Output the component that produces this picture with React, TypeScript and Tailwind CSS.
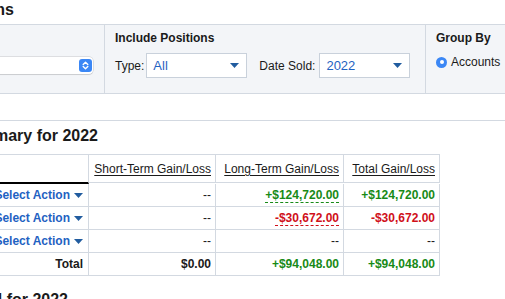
import React from "react";

function Caret() {
  return (
    <svg width="9" height="5" viewBox="0 0 9 5" className="shrink-0">
      <path d="M0 0H9L4.5 5Z" fill="#215c9f" />
    </svg>
  );
}

function SelectBox({ value, width }: { value: string; width: string }) {
  return (
    <div
      className={`${width} shrink-0 h-[25px] bg-white border border-[#c9d1db] flex items-center justify-between pl-[6px] pr-[7px] text-[13px] text-[#1f62c2]`}
    >
      <span>{value}</span>
      <Caret />
    </div>
  );
}

function Stepper() {
  return (
    <div className="w-[13px] h-[13px] rounded-[3px] bg-[#3b87f5] flex items-center justify-center">
      <svg width="13" height="13" viewBox="0 0 13 13">
        <path d="M4.2 5.4L6.5 3.2L8.8 5.4" stroke="white" strokeWidth="1.4" fill="none" strokeLinecap="round" strokeLinejoin="round" />
        <path d="M4.2 7.6L6.5 9.8L8.8 7.6" stroke="white" strokeWidth="1.4" fill="none" strokeLinecap="round" strokeLinejoin="round" />
      </svg>
    </div>
  );
}

function SelectAction() {
  return (
    <div className="h-[23px] border-r border-b border-[#d3d9e1] flex items-center justify-end pr-[5px] whitespace-nowrap">
      <span className="shrink-0 font-bold text-[#1f62c2]">Select Action</span>
      <span className="shrink-0 ml-[4px] flex items-center">
        <Caret />
      </span>
    </div>
  );
}

const cell =
  "h-[23px] border-r border-b border-[#d3d9e1] flex items-center justify-end pr-[4px] whitespace-nowrap";
const headCell =
  "h-[29px] border-t border-r border-b border-[#d3d9e1] flex items-center justify-end pr-[4px] whitespace-nowrap underline underline-offset-[2px]";

export default function App() {
  return (
    <div className="w-[505px] h-[299px] overflow-hidden bg-white text-[#1a1a1a] font-['Liberation_Sans',Arial,sans-serif]">
      <div className="pt-[1px] w-[14px] flex justify-end">
        <h1 className="shrink-0 whitespace-nowrap text-[16px] leading-[18px] font-bold">
          Filter Options
        </h1>
      </div>

      <div className="mt-[5px] h-[70px] flex bg-[#f3f5f8] border-y border-[#d3d9e1]">
        <div className="w-[105px] shrink-0 border-r border-[#d3d9e1] pt-[6px] pr-[11px] flex flex-col items-end">
          <div className="h-[14px]" />
          <div className="mt-[8px] h-[25px] flex items-center justify-end">
            <div className="w-[160px] shrink-0 h-[17px] bg-white rounded-[4px] shadow-[0_0_0_0.5px_rgba(0,0,0,0.18),0_1px_1px_rgba(0,0,0,0.08)] flex items-center justify-end pr-[1px]">
              <Stepper />
            </div>
          </div>
        </div>

        <div className="w-[321px] shrink-0 border-r border-[#d3d9e1] pl-[10px] pt-[6px]">
          <div className="text-[12px] leading-[14px] font-bold">Include Positions</div>
          <div className="mt-[8px] h-[25px] flex items-center text-[12px] whitespace-nowrap">
            <span>Type:</span>
            <div className="ml-[2px]">
              <SelectBox value="All" width="w-[101px]" />
            </div>
            <span className="ml-[12px]">Date Sold:</span>
            <div className="ml-[4px]">
              <SelectBox value="2022" width="w-[91px]" />
            </div>
          </div>
        </div>

        <div className="flex-1 pl-[10px] pt-[6px]">
          <div className="text-[12px] leading-[14px] font-bold whitespace-nowrap">Group By</div>
          <div className="mt-[8px] h-[18px] flex items-center gap-[4px] text-[12px] whitespace-nowrap">
            <div className="w-[11px] h-[11px] shrink-0 rounded-full bg-[#3b87f5] flex items-center justify-center">
              <div className="w-[4px] h-[4px] rounded-full bg-white" />
            </div>
            <span className="-mt-[1px]">Accounts</span>
          </div>
        </div>
      </div>

      <div className="mt-[26px] border-t border-[#d3d9e1]" />

      <div className="mt-[6px] w-[98px] flex justify-end">
        <h2 className="shrink-0 whitespace-nowrap text-[16px] leading-[18px] font-bold">
          Realized Gain/Loss Summary for 2022
        </h2>
      </div>

      <div className="mt-[9px] w-[440px] grid grid-cols-[89px_127px_128px_96px] items-start text-[12px] leading-[14px]">
        <div className="h-[30px] border-t border-r border-[#d3d9e1] border-b-2 border-b-black" />
        <div className={headCell}>Short-Term Gain/Loss</div>
        <div className={headCell}>Long-Term Gain/Loss</div>
        <div className={headCell}>Total Gain/Loss</div>

        <SelectAction />
        <div className={cell}>--</div>
        <div className={cell}>
          <span className="font-bold text-[#178a17] border-b border-dashed border-[#178a17]">
            +$124,720.00
          </span>
        </div>
        <div className={cell}>
          <span className="font-bold text-[#178a17]">+$124,720.00</span>
        </div>

        <SelectAction />
        <div className={cell}>--</div>
        <div className={cell}>
          <span className="font-bold text-[#d0101a] border-b border-dashed border-[#d0101a]">
            -$30,672.00
          </span>
        </div>
        <div className={cell}>
          <span className="font-bold text-[#d0101a]">-$30,672.00</span>
        </div>

        <SelectAction />
        <div className={cell}>--</div>
        <div className={cell}>--</div>
        <div className={cell}>--</div>

        <div className="h-[23px] border-r border-b border-[#d3d9e1] flex items-center justify-end pr-[5px] font-bold">
          Total
        </div>
        <div className={`${cell} font-bold`}>$0.00</div>
        <div className={cell}>
          <span className="font-bold text-[#178a17]">+$94,048.00</span>
        </div>
        <div className={cell}>
          <span className="font-bold text-[#178a17]">+$94,048.00</span>
        </div>
      </div>

      <div className="mt-[15px] w-[68px] flex justify-end">
        <h2 className="shrink-0 whitespace-nowrap text-[16px] leading-[18px] font-bold">
          Realized Gain/Loss Detail for 2022
        </h2>
      </div>
    </div>
  );
}
